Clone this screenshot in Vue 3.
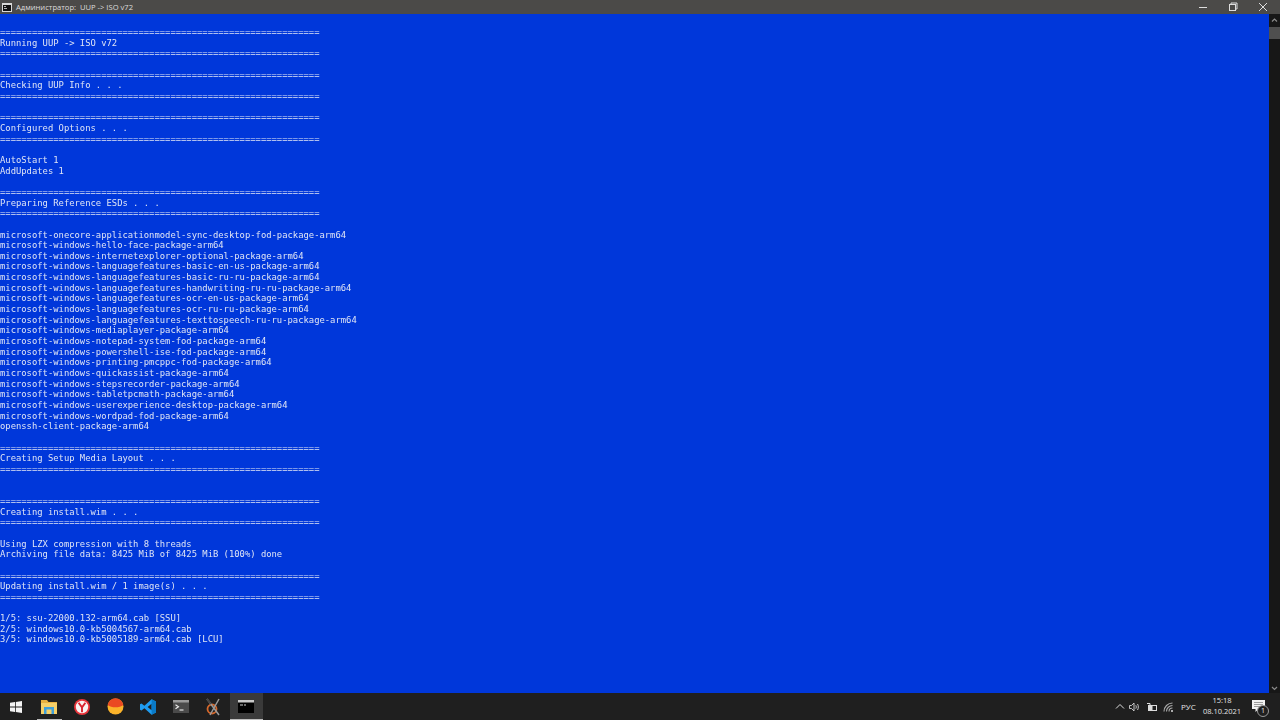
<script setup>
const bar = '='.repeat(60)
const section = (t) => [bar, t, bar, '']
const lines = [
  '',
  ...section('Running UUP -> ISO v72'),
  ...section('Checking UUP Info . . .'),
  ...section('Configured Options . . .'),
  'AutoStart 1',
  'AddUpdates 1',
  '',
  ...section('Preparing Reference ESDs . . .'),
  'microsoft-onecore-applicationmodel-sync-desktop-fod-package-arm64',
  'microsoft-windows-hello-face-package-arm64',
  'microsoft-windows-internetexplorer-optional-package-arm64',
  'microsoft-windows-languagefeatures-basic-en-us-package-arm64',
  'microsoft-windows-languagefeatures-basic-ru-ru-package-arm64',
  'microsoft-windows-languagefeatures-handwriting-ru-ru-package-arm64',
  'microsoft-windows-languagefeatures-ocr-en-us-package-arm64',
  'microsoft-windows-languagefeatures-ocr-ru-ru-package-arm64',
  'microsoft-windows-languagefeatures-texttospeech-ru-ru-package-arm64',
  'microsoft-windows-mediaplayer-package-arm64',
  'microsoft-windows-notepad-system-fod-package-arm64',
  'microsoft-windows-powershell-ise-fod-package-arm64',
  'microsoft-windows-printing-pmcppc-fod-package-arm64',
  'microsoft-windows-quickassist-package-arm64',
  'microsoft-windows-stepsrecorder-package-arm64',
  'microsoft-windows-tabletpcmath-package-arm64',
  'microsoft-windows-userexperience-desktop-package-arm64',
  'microsoft-windows-wordpad-fod-package-arm64',
  'openssh-client-package-arm64',
  '',
  ...section('Creating Setup Media Layout . . .'),
  '',
  ...section('Creating install.wim . . .'),
  'Using LZX compression with 8 threads',
  'Archiving file data: 8425 MiB of 8425 MiB (100%) done',
  '',
  ...section('Updating install.wim / 1 image(s) . . .'),
  '1/5: ssu-22000.132-arm64.cab [SSU]',
  '2/5: windows10.0-kb5004567-arm64.cab',
  '3/5: windows10.0-kb5005189-arm64.cab [LCU]',
]
</script>

<template>
  <div class="screen">
    <header class="titlebar">
      <svg class="title-icon" width="10" height="9" viewBox="0 0 10 9">
        <rect width="10" height="9" fill="#d8d8d8" />
        <rect x="1" y="2" width="8" height="6" fill="#111" />
        <path d="M2 3.5h2M2 5.5h3" stroke="#ddd" stroke-width="0.8" />
      </svg>
      <span class="title-text">Администратор:&nbsp; UUP -&gt; ISO v72</span>
      <div class="window-controls">
        <span class="ctl"><svg width="10" height="10" viewBox="0 0 10 10"><path d="M1 5.5h8" stroke="#ddd" stroke-width="1" /></svg></span>
        <span class="ctl"><svg width="10" height="10" viewBox="0 0 10 10" fill="none" stroke="#ddd" stroke-width="1"><rect x="1.5" y="2.5" width="6" height="6" /><path d="M3 2.5V1h6v6H7.5" /></svg></span>
        <span class="ctl"><svg width="10" height="10" viewBox="0 0 10 10"><path d="M1 1l8 8M9 1l-8 8" stroke="#ddd" stroke-width="1" /></svg></span>
      </div>
    </header>

    <main class="main">
      <div class="console">
        <div class="console-text">
          <div v-for="(line, i) in lines" :key="i" class="line">{{ line }}</div>
        </div>
      </div>
      <aside class="scrollbar">
        <svg class="arrow" width="11" height="9" viewBox="0 0 11 9"><path d="M3 5.5l2.500-2.500L8 5.500" fill="none" stroke="#8a8a8a" stroke-width="1.200" /></svg>
        <div class="thumb"></div>
        <div class="track"></div>
        <svg class="arrow" width="11" height="9" viewBox="0 0 11 9"><path d="M3 3l2.500 2.500L8 3" fill="none" stroke="#8a8a8a" stroke-width="1.200" /></svg>
      </aside>
    </main>

    <footer class="taskbar">
      <div class="apps">
        <div class="app">
          <svg width="12" height="12" viewBox="0 0 12 12" fill="#f4f4f4"><path d="M0 1.800L5 1v4.600H0zM5.800.9L12 0v5.600H5.800zM0 6.400h5V11l-5-.8zM5.800 6.400H12V12l-6.200-.9z" /></svg>
        </div>
        <div class="app app-running">
          <svg width="16" height="15" viewBox="0 0 16 15">
            <path d="M0 1h6l1.500 2H16v12H0z" fill="#e8b040" />
            <rect x="0" y="4" width="16" height="11" fill="#f5cf68" />
            <rect x="3" y="8" width="10" height="7" fill="#3f9fd8" />
            <rect x="5.500" y="10.500" width="5" height="4.500" fill="#f5cf68" />
          </svg>
        </div>
        <div class="app">
          <svg width="16" height="16" viewBox="0 0 16 16">
            <circle cx="8" cy="8" r="8" fill="#e8343b" />
            <circle cx="8" cy="8" r="6.200" fill="#f8f2f2" />
            <path d="M4.600 3.800L8 8.400l3.400-4.600M8 8.200v5" fill="none" stroke="#d9232e" stroke-width="1.900" />
          </svg>
        </div>
        <div class="app">
          <svg width="17" height="17" viewBox="0 0 17 17">
            <circle cx="8.500" cy="8.500" r="8" fill="#fbb32a" />
            <path d="M.6 7a8 8 0 0 1 15.800 0c-2 1.600-4.800 2.300-7.900 2.300S2.600 8.600.6 7z" fill="#ea4a22" />
          </svg>
        </div>
        <div class="app">
          <svg width="16" height="16" viewBox="0 0 16 16">
            <path d="M11.600.3L16 2.400v11.200l-4.400 2.100L4.400 9.300 1.500 11.600 0 10.800V5.200l1.500-.8 2.900 2.300zM11.600 4.700L7.600 8l4 3.300z" fill="#1f9cf0" fill-rule="evenodd" />
            <path d="M11.600.3L16 2.400v11.200l-4.400 2.100z" fill="#0a7ac6" />
          </svg>
        </div>
        <div class="app">
          <svg width="16" height="13" viewBox="0 0 16 13">
            <rect width="16" height="13" fill="#4a4a4a" />
            <rect width="16" height="2.500" fill="#9a9a9a" />
            <path d="M2.500 4.800l3 2-3 2" fill="none" stroke="#eee" stroke-width="1.100" />
            <path d="M6.500 10h4" stroke="#eee" stroke-width="1.100" />
          </svg>
        </div>
        <div class="app app-x">
          <svg width="18" height="18" viewBox="0 0 18 18" fill="none">
            <circle cx="8" cy="11" r="4.500" stroke="#d5682c" stroke-width="1.800" />
            <path d="M3 1l12 16M15 1L6 17" stroke="#9b9b9b" stroke-width="1.500" />
            <path d="M3 1l4 5" stroke="#444" stroke-width="2" />
          </svg>
        </div>
        <div class="app app-active">
          <svg width="16" height="13" viewBox="0 0 16 13">
            <rect width="16" height="13" fill="#000" />
            <rect width="16" height="2.500" fill="#c9c9c9" />
            <path d="M2 5h3M6 5h2" stroke="#e8e8e8" stroke-width="0.900" />
          </svg>
        </div>
      </div>

      <div class="tray">
        <svg class="tray-icon tray-chevron" width="10" height="7" viewBox="0 0 10 7"><path d="M1 5.500l4-4 4 4" fill="none" stroke="#ddd" stroke-width="1" /></svg>
        <svg class="tray-icon" width="11" height="10" viewBox="0 0 11 10" fill="none" stroke="#d5d5d5" stroke-width="0.900"><path d="M.5 3.500h2L5 1v8L2.500 6.500h-2z" /><path d="M6.800 3.300c.6.900.6 2.500 0 3.400M8.500 2c1.100 1.600 1.100 4.400 0 6" /></svg>
        <svg class="tray-icon" width="11" height="8" viewBox="0 0 11 8"><path d="M1 .5h3v2" fill="none" stroke="#ddd" stroke-width="1" /><rect x="2.500" y="2.500" width="8" height="5" fill="none" stroke="#ddd" stroke-width="1" /><rect x="3" y="3" width="3.500" height="4" fill="#ddd" /></svg>
        <svg class="tray-icon" width="11" height="10" viewBox="0 0 11 10" fill="none"><path d="M1 9.500A8.500 8.500 0 0 1 9.500 1M3.500 9.500a6 6 0 0 1 6-6M6 9.500A3.500 3.500 0 0 1 9.500 6" stroke="#aaa" stroke-width="1.100" /><circle cx="9" cy="9" r="1" fill="#ddd" /></svg>
        <span class="lang">РУС</span>
        <div class="clock">
          <span>15:18</span>
          <span>08.10.2021</span>
        </div>
        <div class="notify">
          <svg width="13" height="12" viewBox="0 0 13 12">
            <path d="M0 0h13v9H6.500L3.500 12V9H0z" fill="#f2f2f2" />
            <path d="M2 2.500h9M2 4.500h9M2 6.500h6" stroke="#777" stroke-width="0.700" />
          </svg>
          <span class="badge">1</span>
        </div>
      </div>
    </footer>
  </div>
</template>

<style scoped>
.screen {
  width: 1280px;
  height: 720px;
  display: flex;
  flex-direction: column;
  overflow: hidden;
  font-family: "Open Sans", "Noto Sans", sans-serif;
}
.titlebar {
  height: 14px;
  flex: none;
  display: flex;
  align-items: center;
  padding-left: 2px;
  background: #4b4a48;
  color: #dcdcdc;
}
.title-icon { margin-right: 4px; }
.title-text {
  font-size: 7.600px;
  line-height: 14px;
  white-space: nowrap;
}
.window-controls {
  margin-left: auto;
  display: flex;
  height: 14px;
  padding-right: 2px;
}
.ctl {
  width: 30px;
  display: flex;
  align-items: center;
  justify-content: center;
}
.main {
  flex: 1;
  min-height: 0;
  display: flex;
}
.console {
  flex: 1;
  padding-top: 2.400px;
  background: #0037da;
  overflow: hidden;
  color: #dfe5f5;
  font-family: "DejaVu Sans Mono", "Liberation Mono", monospace;
  font-size: 8.860px;
  line-height: 10.667px;
}
.console-text {
  filter: blur(0.3px);
}
.line {
  height: 10.667px;
  white-space: pre;
}
.scrollbar {
  width: 11px;
  flex: none;
  background: #171717;
  display: flex;
  flex-direction: column;
  padding-top: 2px;
}
.arrow { flex: none; }
.thumb {
  height: 12px;
  flex: none;
  margin-top: 2px;
  background: #4f4f4f;
}
.track { flex: 1; }
.taskbar {
  height: 27px;
  flex: none;
  display: flex;
  align-items: stretch;
  background: #1f1f1f;
}
.apps {
  display: flex;
}
.app {
  width: 32.900px;
  display: flex;
  align-items: center;
  justify-content: center;
  position: relative;
}
.app-x { padding-right: 2px; box-sizing: border-box; }
.app-running::after,
.app-active::after {
  content: "";
  position: absolute;
  left: 4px;
  right: 4px;
  bottom: 0;
  height: 1px;
  background: #bdbdbd;
}
.app-active {
  background: #3a3a3a;
  padding-right: 2px;
  box-sizing: border-box;
}
.app-active::after {
  left: 0;
  right: 0;
}
.tray {
  margin-left: auto;
  display: flex;
  align-items: center;
  color: #e4e4e4;
}
.tray-icon { margin-right: 6px; }
.tray-chevron { margin-right: 4.500px; }
.lang {
  font-size: 8px;
  width: 15px;
  white-space: nowrap;
  margin: 0 8px 0 1px;
}
.clock {
  width: 36px;
  display: flex;
  flex-direction: column;
  align-items: center;
  font-size: 7.500px;
  line-height: 11px;
  margin-right: 12px;
  padding-bottom: 2px;
  white-space: nowrap;
}
.notify {
  width: 17px;
  height: 22px;
  position: relative;
  margin-right: 11px;
  padding-top: 4px;
  box-sizing: border-box;
}
.notify svg { display: block; }
.badge {
  position: absolute;
  right: 0;
  bottom: 1px;
  width: 10px;
  height: 10px;
  border-radius: 50%;
  border: 1px solid #999;
  background: #1f1f1f;
  color: #eee;
  font-size: 7px;
  line-height: 10px;
  text-align: center;
}
</style>
